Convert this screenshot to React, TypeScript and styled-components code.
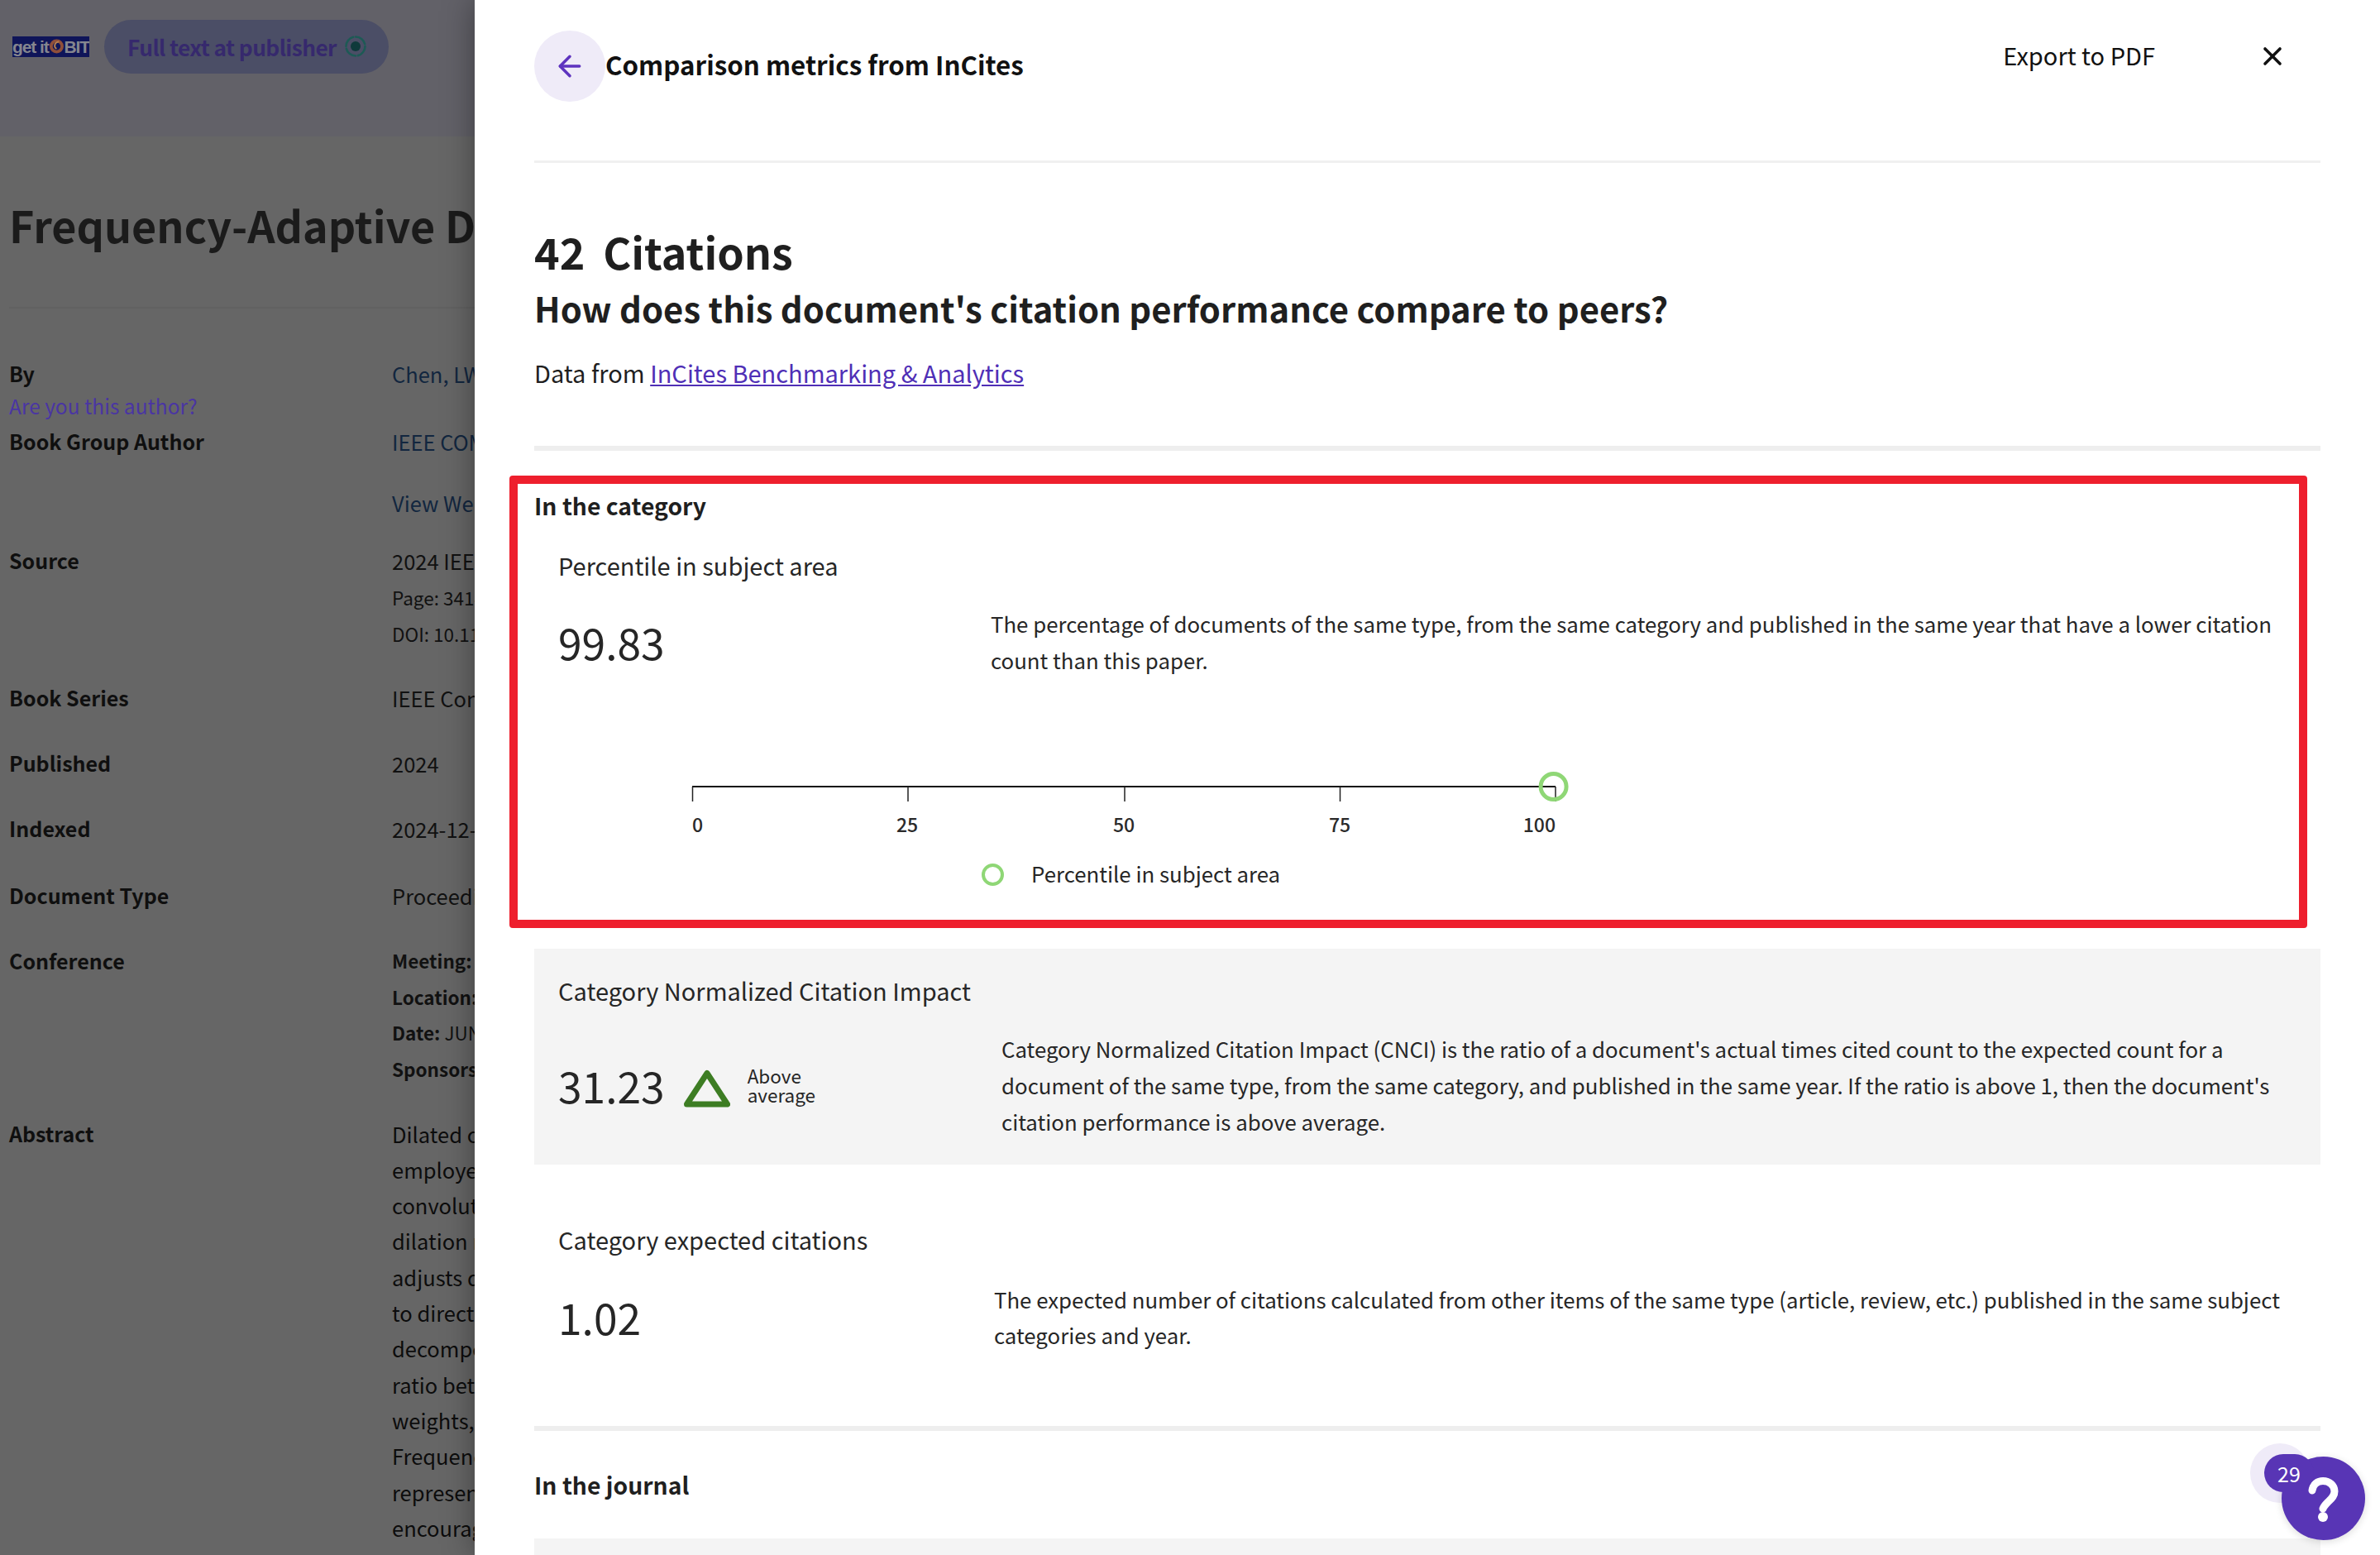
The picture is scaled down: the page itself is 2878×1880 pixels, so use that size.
import React from 'react';
import styled, { createGlobalStyle } from 'styled-components';
import { ArrowLeft, X } from 'lucide-react';

const GlobalStyle = createGlobalStyle`
  html, body {
    margin: 0;
    padding: 0;
    background: #fff;
  }
  * {
    box-sizing: border-box;
  }
  body {
    font-family: "Noto Sans CJK SC", "Noto Sans", sans-serif;
    color: #1f1f1f;
  }
`;

const Screen = styled.div`
  position: relative;
  display: flex;
  width: 2878px;
  height: 1880px;
  overflow: hidden;
`;

/* dimmed record page behind the drawer */
const RecordPage = styled.div`
  flex: 0 0 574px;
  height: 100%;
  overflow: hidden;
  background: #666666;
  white-space: nowrap;
`;

const RecordTopBar = styled.div`
  height: 165px;
  padding-left: 15px;
  background: #626168;
`;

const TopBarInner = styled.div`
  display: flex;
  align-items: center;
  gap: 18px;
  height: 112px;
`;

const GetItLogo = styled.div`
  display: flex;
  align-items: center;
  justify-content: center;
  width: 93px;
  height: 25px;
  overflow: hidden;
  background: #0f1559;
  color: #85868f;
  font-family: "Liberation Sans", sans-serif;
  font-size: 21px;
  font-weight: 700;
  letter-spacing: -1.1px;
  line-height: 25px;
`;

const FullTextPill = styled.div`
  display: flex;
  align-items: center;
  gap: 9px;
  width: 344px;
  height: 65px;
  padding-left: 28px;
  border-radius: 33px;
  background: #4b4e66;
  color: #36296d;
  font-size: 26.3px;
  letter-spacing: -0.6px;
  font-weight: 600;
`;

const RecordTitle = styled.h1`
  margin: 67px 0 59px 11px;
  font-size: 52px;
  line-height: 80px;
  font-weight: 700;
  color: #1b1b1b;
`;

const RecordRule = styled.div`
  height: 2px;
  margin: 0 0 57px 11px;
  background: #616161;
`;

const MetaRow = styled.div<{ $gap?: number }>`
  display: grid;
  grid-template-columns: 463px 1fr;
  margin-top: ${({ $gap }) => $gap ?? 0}px;
  padding-left: 11px;
  font-size: 25.5px;
  line-height: 43px;
`;

const MetaLabel = styled.div`
  font-size: 25px;
  font-weight: 600;
  color: #0f0f0f;
`;

const AuthorPrompt = styled.div`
  margin-top: -2px;
  margin-bottom: 2px;
  line-height: 39px;
  font-size: 24.5px;
  font-weight: 400;
  color: #4a35a3;
`;

const MetaLink = styled.div<{ $gap?: number }>`
  margin-top: ${({ $gap }) => $gap ?? 0}px;
  color: #12263f;
`;

const MetaText = styled.div<{ $height?: number }>`
  height: ${({ $height }) => $height ?? 43}px;
  color: #111;
`;

const MetaSmall = styled.div`
  font-size: 22.5px;
  line-height: 43.6px;
  color: #111;

  b {
    font-weight: 600;
  }
`;

const AbstractText = styled.div`
  line-height: 43.3px;
  color: #0c0c0c;
`;

/* drawer */
const Drawer = styled.main`
  position: relative;
  flex: 1;
  height: 100%;
  overflow: hidden;
  padding: 0 72px;
  background: #fff;
  box-shadow: 0 0 36px rgba(0, 0, 0, 0.38);
`;

const DrawerHeader = styled.header`
  display: flex;
  align-items: flex-start;
  height: 197px;
  padding-top: 37px;
  border-bottom: 3px solid #f0f0f0;
`;

const BackButton = styled.div`
  display: flex;
  align-items: center;
  justify-content: center;
  flex: 0 0 86px;
  height: 86px;
  border-radius: 50%;
  background: #efebf8;
  color: #5e33bf;
`;

const DrawerTitle = styled.h2`
  flex: 1;
  margin: -2px 0 0;
  font-size: 31.3px;
  line-height: 86px;
  font-weight: 600;
  color: #111;
`;

const HeaderActions = styled.div`
  display: flex;
  align-items: center;
  gap: 124px;
  height: 46px;
  margin-top: 6px;
  margin-right: 40px;
`;

const ExportLink = styled.span`
  font-size: 29px;
  line-height: 46px;
  color: #111;
`;

const CloseIcon = styled(X)`
  display: block;
  margin-top: 3px;
  color: #111;
`;

const CitationCount = styled.h1`
  margin: 72px 0 2px;
  font-size: 52px;
  line-height: 70px;
  font-weight: 700;
  word-spacing: 10px;
  color: #1f1f1f;
`;

const Question = styled.h2`
  margin: -2px 0 2px;
  font-size: 41.8px;
  line-height: 66px;
  font-weight: 700;
  color: #1f1f1f;
`;

const DataSource = styled.p`
  margin: 23px 0 0;
  font-size: 29px;
  line-height: 44px;
  color: #1f1f1f;

  a {
    color: #4f2fb6;
    text-decoration: underline;
  }
`;

const ThickRule = styled.div<{ $top: number }>`
  height: 6px;
  margin-top: ${({ $top }) => $top}px;
  background: #eeeeee;
`;

const HighlightBox = styled.section`
  margin: 30px 16px 0 -30px;
  padding: 2px 0 36px 20px;
  border: 10px solid #ee1f2d;
  border-radius: 4px;
`;

const SectionTitle = styled.h3<{ $top?: number }>`
  margin: ${({ $top }) => $top ?? 0}px 0 0;
  font-size: 28.3px;
  line-height: 48px;
  font-weight: 600;
  color: #1f1f1f;
`;

const MetricCard = styled.div<{ $shaded?: boolean; $top?: number; $bottom?: number }>`
  margin-top: ${({ $top }) => $top ?? 0}px;
  padding: 0 0 ${({ $bottom }) => $bottom ?? 0}px 29px;
  background: ${({ $shaded }) => ($shaded ? '#f4f4f4' : 'transparent')};
`;

const MetricName = styled.div<{ $top: number }>`
  padding-top: ${({ $top }) => $top}px;
  font-size: 29px;
  line-height: 44px;
  color: #262626;
`;

const MetricRow = styled.div<{ $valueWidth: number; $textWidth: number; $top?: number }>`
  display: grid;
  grid-template-columns: ${({ $valueWidth }) => $valueWidth}px ${({ $textWidth }) => $textWidth}px;
  align-items: center;
  margin-top: ${({ $top }) => $top ?? 27}px;
`;

const MetricValue = styled.div`
  display: flex;
  align-items: center;
  font-size: 51.5px;
  line-height: 70px;
  color: #262626;
`;

const MetricText = styled.p`
  margin: 0;
  font-size: 25.8px;
  line-height: 43.7px;
  color: #262626;
`;

const AboveAverage = styled.div`
  display: flex;
  align-items: center;
  gap: 21px;
  margin-left: 23px;
  font-size: 22.5px;
  line-height: 22.5px;
  color: #262626;
`;

const TriangleSvg = styled.svg`
  display: block;
  margin-top: 8px;
`;

const ChartSvg = styled.svg`
  display: block;
  margin: 101px 0 0 180px;

  text {
    font-family: "Noto Sans CJK SC", "Noto Sans", sans-serif;
    font-size: 23px;
    font-weight: 500;
    fill: #2a2a2a;
  }
`;

const ChartLegend = styled.div`
  display: flex;
  align-items: center;
  gap: 33px;
  margin: 16px 0 0 541px;
  font-size: 25.8px;
  line-height: 40px;
  color: #262626;
`;

const LegendDot = styled.span`
  flex: 0 0 27px;
  height: 27px;
  margin-top: 3px;
  border: 4.5px solid #8fd776;
  border-radius: 50%;
`;

const BottomCard = styled.div`
  height: 60px;
  margin-top: 41px;
  background: #f4f4f4;
`;

/* floating help, sits over the drawer */
const HelpWidget = styled.div`
  position: absolute;
  left: 2721px;
  top: 1745px;
  width: 140px;
  height: 118px;
`;

const HelpHalo = styled.span`
  position: absolute;
  left: 0;
  top: 0;
  width: 72px;
  height: 72px;
  border-radius: 50%;
  background: #efebf8;
`;

const HelpButton = styled.span`
  position: absolute;
  left: 38px;
  top: 16px;
  width: 101px;
  height: 101px;
  border-radius: 50%;
  background: #5835b5;
  box-shadow: 0 2px 10px rgba(0, 0, 0, 0.14);
`;

const HelpBadge = styled.span`
  position: absolute;
  left: 17px;
  top: 13px;
  display: flex;
  align-items: center;
  justify-content: center;
  width: 60px;
  height: 46px;
  border-radius: 23px;
  background: #5835b5;
  color: #fff;
  font-size: 25px;
  line-height: 46px;
`;

const abstractLines = [
  'Dilated convolutions have been widely',
  'employed in semantic segmentation',
  'convolutional neural networks by',
  'dilation rate for each layer. This',
  'adjusts dilation rates per pixel',
  'to directly enlarge receptive fields',
  'decomposes features into high and',
  'ratio between the frequency bands',
  'weights, reducing the number of',
  'Frequency Selection module to',
  'representation of the decomposed',
  'encourages larger receptive fields',
];

const ticks = [
  { x: 11.5, label: '0', labelX: 11, anchor: 'start' },
  { x: 272, label: '25', labelX: 271, anchor: 'middle' },
  { x: 534, label: '50', labelX: 533, anchor: 'middle' },
  { x: 794.5, label: '75', labelX: 794, anchor: 'middle' },
  { x: 1055, label: '100', labelX: 1055, anchor: 'end' },
];

const TargetIcon = () => (
  <svg width="28" height="28" viewBox="0 0 28 28" fill="none">
    <circle cx="14" cy="14" r="6" fill="#0f3a3b" />
    <circle cx="14" cy="14" r="11.5" stroke="#1d5a55" strokeWidth="2.6" strokeDasharray="15 3" strokeLinecap="round" />
  </svg>
);

const SwirlIcon = () => (
  <svg width="20" height="24" viewBox="0 0 20 24" fill="none">
    <circle cx="10" cy="12" r="7" stroke="#8f4f3a" strokeWidth="4" />
    <path d="M13 6C7 7 6 13 10 15" stroke="#b8814f" strokeWidth="2" />
  </svg>
);

const TriangleIcon = () => (
  <TriangleSvg width="56" height="46" viewBox="0 0 56 46" fill="none">
    <path d="M28 4.5 L52.5 42 H3.5 Z" stroke="#3d7d23" strokeWidth="7" strokeLinejoin="round" />
  </TriangleSvg>
);

const QuestionMark = () => (
  <svg width="101" height="101" viewBox="0 0 101 101" fill="none">
    <path
      d="M37 41C38 33 44 29.5 50 29.5C58 29.5 64 35 64 42C64 48 60 51 56 55C53 58 51 60 50 63"
      stroke="#fff"
      strokeWidth="9"
      strokeLinecap="round"
    />
    <circle cx="50" cy="73" r="6" fill="#fff" />
  </svg>
);

const App = () => {
  return (
    <Screen>
      <GlobalStyle />
      <RecordPage>
        <RecordTopBar>
          <TopBarInner>
            <GetItLogo>
              get it
              <SwirlIcon />
              BIT
            </GetItLogo>
            <FullTextPill>
              Full text at publisher
              <TargetIcon />
            </FullTextPill>
          </TopBarInner>
        </RecordTopBar>
        <RecordTitle>Frequency-Adaptive Dilated Convolution for Semantic Segmentation</RecordTitle>
        <RecordRule />

        <MetaRow>
          <MetaLabel>
            By
            <AuthorPrompt>Are you this author?</AuthorPrompt>
          </MetaLabel>
          <MetaLink>Chen, LW (Chen, Linwei)</MetaLink>
        </MetaRow>
        <MetaRow>
          <MetaLabel>Book Group Author</MetaLabel>
          <div>
            <MetaLink>IEEE COMP SOC</MetaLink>
            <MetaLink $gap={31}>View Web of Science ResearcherID</MetaLink>
          </div>
        </MetaRow>
        <MetaRow $gap={27}>
          <MetaLabel>Source</MetaLabel>
          <div>
            <MetaText $height={45}>2024 IEEE/CVF Conference on Computer Vision</MetaText>
            <MetaSmall>Page: 3414-3425</MetaSmall>
            <MetaSmall>DOI: 10.1109/CVPR52733.2024.00328</MetaSmall>
          </div>
        </MetaRow>
        <MetaRow $gap={34}>
          <MetaLabel>Book Series</MetaLabel>
          <MetaText>IEEE Conference on Computer Vision</MetaText>
        </MetaRow>
        <MetaRow $gap={36}>
          <MetaLabel>Published</MetaLabel>
          <MetaText>2024</MetaText>
        </MetaRow>
        <MetaRow $gap={36}>
          <MetaLabel>Indexed</MetaLabel>
          <MetaText>2024-12-18</MetaText>
        </MetaRow>
        <MetaRow $gap={38}>
          <MetaLabel>Document Type</MetaLabel>
          <MetaText>Proceedings Paper</MetaText>
        </MetaRow>
        <MetaRow $gap={36}>
          <MetaLabel>Conference</MetaLabel>
          <div>
            <MetaSmall><b>Meeting: IEEE/CVF Conference</b></MetaSmall>
            <MetaSmall><b>Location: Seattle, WA</b></MetaSmall>
            <MetaSmall><b>Date:</b> JUN 16-22, 2024</MetaSmall>
            <MetaSmall><b>Sponsors: IEEE Comp Soc</b></MetaSmall>
          </div>
        </MetaRow>
        <MetaRow $gap={34}>
          <MetaLabel>Abstract</MetaLabel>
          <div>
            {abstractLines.map((line) => (
              <AbstractText key={line}>{line}</AbstractText>
            ))}
          </div>
        </MetaRow>
      </RecordPage>

      <Drawer>
        <DrawerHeader>
          <BackButton>
            <ArrowLeft size={40} strokeWidth={2.1} />
          </BackButton>
          <DrawerTitle>Comparison metrics from InCites</DrawerTitle>
          <HeaderActions>
            <ExportLink>Export to PDF</ExportLink>
            <CloseIcon size={36} strokeWidth={2.4} />
          </HeaderActions>
        </DrawerHeader>

        <CitationCount>42 Citations</CitationCount>
        <Question>How does this document's citation performance compare to peers?</Question>
        <DataSource>
          Data from <a href="#incites">InCites Benchmarking &amp; Analytics</a>
        </DataSource>
        <ThickRule $top={67} />

        <HighlightBox>
          <SectionTitle>In the category</SectionTitle>
          <MetricCard>
            <MetricName $top={26}>Percentile in subject area</MetricName>
            <MetricRow $valueWidth={523} $textWidth={1565}>
              <MetricValue>99.83</MetricValue>
              <MetricText>
                The percentage of documents of the same type, from the same category and published in the same year that have a lower citation count than this paper.
              </MetricText>
            </MetricRow>
          </MetricCard>
          <ChartSvg width="1100" height="100" viewBox="0 0 1100 100">
            <line x1="11" y1="31" x2="1055" y2="31" stroke="#111" strokeWidth="2" />
            {ticks.map((t) => (
              <g key={t.label}>
                <line x1={t.x} y1="31" x2={t.x} y2="49" stroke="#222" strokeWidth="1.5" />
                <text x={t.labelX} y="86" textAnchor={t.anchor}>{t.label}</text>
              </g>
            ))}
            <circle cx="1052.6" cy="31" r="15.5" fill="none" stroke="#8fd776" strokeWidth="5" />
          </ChartSvg>
          <ChartLegend>
            <LegendDot />
            Percentile in subject area
          </ChartLegend>
        </HighlightBox>

        <MetricCard $shaded $top={25} $bottom={30}>
          <MetricName $top={28}>Category Normalized Citation Impact</MetricName>
          <MetricRow $valueWidth={536} $textWidth={1540}>
            <MetricValue>
              31.23
              <AboveAverage>
                <TriangleIcon />
                <span>Above<br />average</span>
              </AboveAverage>
            </MetricValue>
            <MetricText>
              Category Normalized Citation Impact (CNCI) is the ratio of a document's actual times cited count to the expected count for a document of the same type, from the same category, and published in the same year. If the ratio is above 1, then the document's citation performance is above average.
            </MetricText>
          </MetricRow>
        </MetricCard>

        <MetricCard $top={41}>
          <MetricName $top={27}>Category expected citations</MetricName>
          <MetricRow $valueWidth={527} $textWidth={1565} $top={29}>
            <MetricValue>1.02</MetricValue>
            <MetricText>
              The expected number of citations calculated from other items of the same type (article, review, etc.) published in the same subject categories and year.
            </MetricText>
          </MetricRow>
        </MetricCard>

        <ThickRule $top={88} />
        <SectionTitle $top={41}>In the journal</SectionTitle>
        <BottomCard />
      </Drawer>

      <HelpWidget>
        <HelpHalo />
        <HelpButton>
          <QuestionMark />
        </HelpButton>
        <HelpBadge>29</HelpBadge>
      </HelpWidget>
    </Screen>
  );
};

export default App;
